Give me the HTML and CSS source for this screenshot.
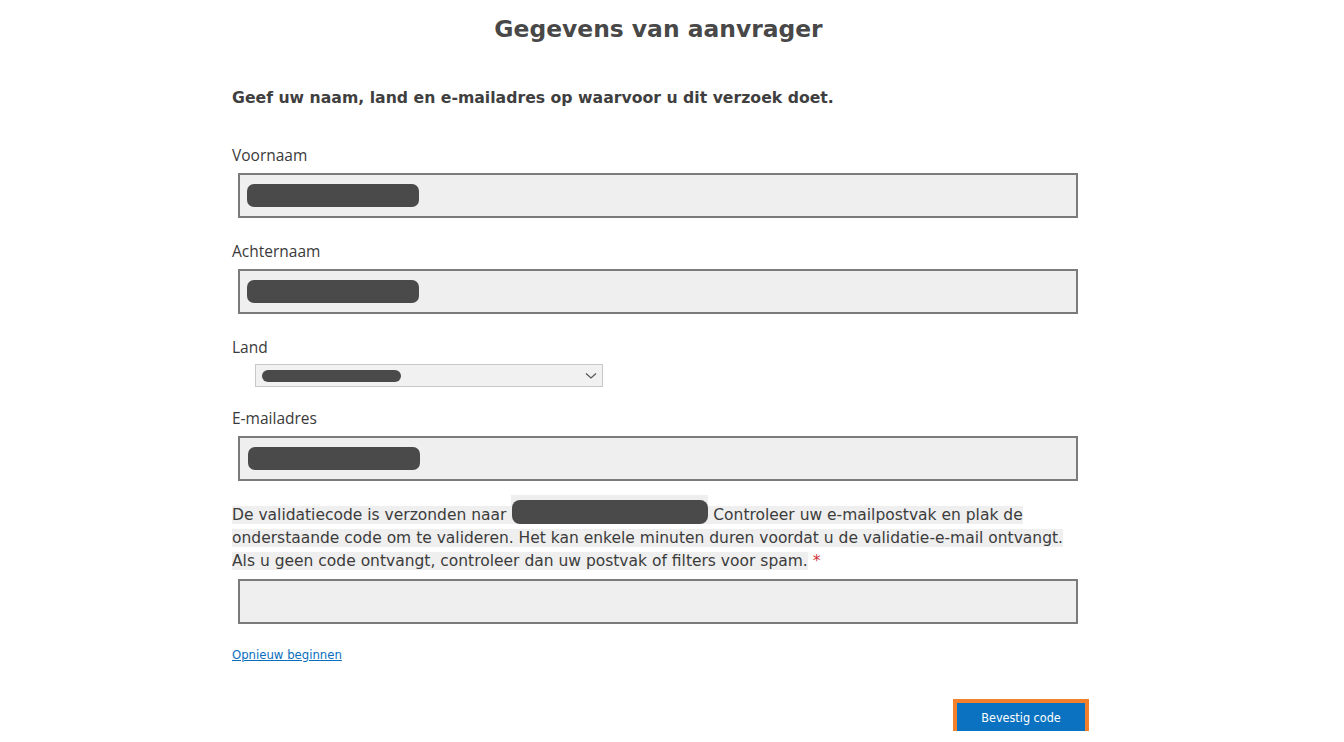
FILE: index.html
```html
<!DOCTYPE html>
<html lang="nl">
<head>
<meta charset="utf-8">
<title>Gegevens van aanvrager</title>
<link rel="stylesheet" href="styles.css">
</head>
<body>
<main class="page">
  <h1 class="title">Gegevens van aanvrager</h1>
  <p class="intro">Geef uw naam, land en e-mailadres op waarvoor u dit verzoek doet.</p>

  <div class="field">
    <label class="label">Voornaam</label>
    <div class="input"><span class="redact"></span></div>
  </div>

  <div class="field">
    <label class="label">Achternaam</label>
    <div class="input"><span class="redact"></span></div>
  </div>

  <div class="field">
    <label class="label">Land</label>
    <div class="select">
      <span class="redact redact-sm"></span>
      <svg class="chevron" width="12" height="8" viewBox="0 0 12 8"><path d="M1 1.5 L6 6 L11 1.5" fill="none" stroke="#555" stroke-width="1.2"/></svg>
    </div>
  </div>

  <div class="field field-email">
    <label class="label">E-mailadres</label>
    <div class="input"><span class="redact redact-email"></span></div>
  </div>

  <p class="notice"><span class="hl">De validatiecode is verzonden naar </span><span class="mailbox"><span class="mail-redact"></span></span><span class="hl"> Controleer uw e-mailpostvak en plak de onderstaande code om te valideren. Het kan enkele minuten duren voordat u de validatie-e-mail ontvangt. Als u geen code ontvangt, controleer dan uw postvak of filters voor spam.</span>&nbsp;<span class="req">*</span></p>

  <div class="input input-code"></div>

  <a class="restart" href="#">Opnieuw beginnen</a>

  <div class="actions">
    <button class="confirm" type="button">Bevestig code</button>
  </div>
</main>
</body>
</html>
```
FILE: styles.css
```css
html, body {
  margin: 0;
  padding: 0;
  background: #ffffff;
}

.page {
  width: 853px;
  margin-left: 232px;
  display: flex;
  flex-direction: column;
  color: #3b3b3b;
}

.title {
  margin: 14px 0 0 0;
  font-family: "DejaVu Sans", Verdana, sans-serif;
  font-weight: bold;
  font-size: 23.4px;
  line-height: 30px;
  text-align: center;
  color: #484848;
}

.intro {
  margin: 44px 0 0 0;
  font-family: "DejaVu Sans", Verdana, sans-serif;
  font-weight: bold;
  font-size: 15.7px;
  line-height: 20px;
  color: #3f3f3f;
}

.field {
  display: flex;
  flex-direction: column;
  margin-top: 22px;
}

.intro + .field {
  margin-top: 36px;
}

.field-email {
  margin-top: 20px;
}

.label {
  font-family: "Open Sans", sans-serif;
  font-size: 15.5px;
  line-height: 22px;
  color: #3a3a3a;
  margin-bottom: 7px;
}

.input {
  margin-left: 6px;
  width: 840px;
  height: 45px;
  box-sizing: border-box;
  border: 2px solid #7b7b7b;
  background: #efefef;
  display: flex;
  align-items: center;
  padding-left: 7px;
}

.redact {
  display: block;
  width: 172px;
  height: 23px;
  border-radius: 7px;
  background: #4a4a4a;
}

.redact-email {
  margin-left: 1px;
}

.select {
  margin-left: 23px;
  margin-top: -1px;
  width: 348px;
  height: 23px;
  box-sizing: border-box;
  border: 1px solid #c8c8c8;
  background: #f1f1f1;
  display: flex;
  align-items: center;
  justify-content: space-between;
  padding: 0 5px 0 6px;
}

.redact-sm {
  width: 139px;
  height: 12px;
  border-radius: 6px;
}

.chevron {
  display: block;
}

.notice {
  margin: 14px 0 0 0;
  font-family: "DejaVu Sans", sans-serif;
  font-size: 15.5px;
  line-height: 23px;
  color: #3c3c3c;
}

.hl {
  background: #efefef;
}

.mailbox {
  display: inline-block;
  vertical-align: -4px;
  width: 197px;
  height: 29px;
  background: #eeeeee;
  position: relative;
}

.mail-redact {
  position: absolute;
  left: 1px;
  right: 0;
  bottom: 0;
  height: 24px;
  border-radius: 8px;
  background: #4a4a4a;
}

.req {
  color: #d13438;
}

.input-code {
  margin-top: 6px;
}

.restart {
  margin-top: 23px;
  align-self: flex-start;
  font-family: "DejaVu Sans", Verdana, sans-serif;
  font-size: 11.7px;
  line-height: 16px;
  color: #0a6ebd;
  text-decoration: underline;
}

.actions {
  display: flex;
  justify-content: flex-end;
  margin-top: 40px;
}

.confirm {
  width: 128px;
  height: 28px;
  border: none;
  background: #0a72c0;
  color: #ffffff;
  font-family: "DejaVu Sans Condensed", "DejaVu Sans", sans-serif;
  font-size: 12.5px;
  padding: 0;
  outline: 4px solid #f5802b;
}
```
